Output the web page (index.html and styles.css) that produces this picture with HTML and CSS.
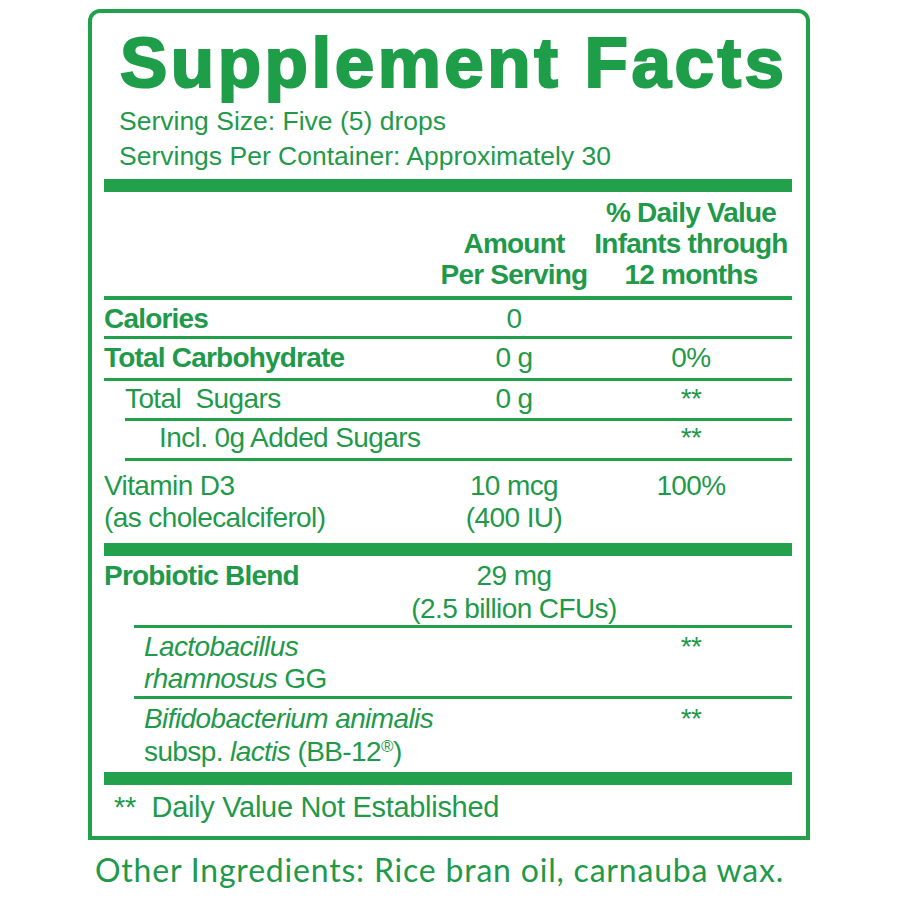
FILE: index.html
```html
<!DOCTYPE html>
<html lang="en">
<head>
<meta charset="utf-8">
<title>Supplement Facts</title>
<link rel="stylesheet" href="styles.css">
</head>
<body>
<div class="panel">
  <h1 class="title">Supplement Facts</h1>
  <div class="serving">
    <div>Serving Size: Five (5) drops</div>
    <div>Servings Per Container: Approximately 30</div>
  </div>
  <div class="bar"></div>
  <div class="grid head">
    <div></div>
    <div class="amt">Amount<br>Per Serving</div>
    <div class="dv">% Daily Value<br>Infants through<br>12 months</div>
  </div>
  <div class="rule medium"></div>

  <div class="grid row r-cal">
    <div class="label strong">Calories</div>
    <div class="amt">0</div>
    <div class="dv"></div>
  </div>
  <div class="rule"></div>
  <div class="grid row r-carb">
    <div class="label strong">Total Carbohydrate</div>
    <div class="amt">0 g</div>
    <div class="dv">0%</div>
  </div>
  <div class="rule"></div>
  <div class="grid row r-sug">
    <div class="label in1">Total&nbsp; Sugars</div>
    <div class="amt">0 g</div>
    <div class="dv">**</div>
  </div>
  <div class="rule ind1"></div>
  <div class="grid row r-add">
    <div class="label in2">Incl. 0g Added Sugars</div>
    <div class="amt"></div>
    <div class="dv">**</div>
  </div>
  <div class="rule ind1"></div>
  <div class="grid row r-vit">
    <div class="label">Vitamin D3<br>(as cholecalciferol)</div>
    <div class="amt">10 mcg<br>(400 IU)</div>
    <div class="dv">100%</div>
  </div>
  <div class="bar"></div>
  <div class="grid row r-pro">
    <div class="label strong">Probiotic Blend</div>
    <div class="amt">29 mg<br>(2.5 billion CFUs)</div>
    <div class="dv"></div>
  </div>
  <div class="rule ind2"></div>
  <div class="grid row r-lac">
    <div class="label in3"><i>Lactobacillus</i><br><i>rhamnosus</i> GG</div>
    <div class="amt"></div>
    <div class="dv">**</div>
  </div>
  <div class="rule ind2"></div>
  <div class="grid row r-bif">
    <div class="label in3"><i>Bifidobacterium animalis</i><br>subsp. <i>lactis</i> (BB-12<sup>®</sup>)</div>
    <div class="amt"></div>
    <div class="dv">**</div>
  </div>
  <div class="bar"></div>
  <div class="foot">**&nbsp; Daily Value Not Established</div>
</div>
<p class="other">Other Ingredients: Rice bran oil, carnauba wax.</p>
</body>
</html>
```

FILE: styles.css
```css
* { box-sizing: border-box; }

body {
  margin: 0;
  background: #ffffff;
  color: #1f9a4a;
  font-family: "Liberation Sans", Arial, sans-serif;
}

.panel {
  margin: 9px 0 0 88px;
  width: 722px;
  border: 4px solid #22a04c;
  border-radius: 12px 12px 0 0;
  padding: 14px 14px 0 12px;
}

.title {
  margin: 0 0 0 16px;
  font-size: 71px;
  line-height: 71px;
  font-weight: 700;
  letter-spacing: 3.5px;
  -webkit-text-stroke: 2.2px #1f9e4a;
  color: #1f9e4a;
  white-space: nowrap;
}

.serving {
  margin: 6px 0 0 15px;
  font-size: 26.5px;
  line-height: 35px;
}

.bar {
  height: 13px;
  background: #22a04c;
}

.serving + .bar { margin-top: 5px; }

.rule {
  height: 3px;
  background: #22a04c;
}
.rule.medium { height: 4px; }
.rule.ind1 { margin-left: 21px; }
.rule.ind2 { margin-left: 30px; }

.grid {
  display: grid;
  grid-template-columns: 330px 160px 194px;
  font-size: 28px;
  letter-spacing: -0.6px;
  white-space: nowrap;
}

.amt {
  text-align: center;
  margin: 0 -40px;
}
.dv {
  text-align: center;
  margin: 0 -20px;
}

.head {
  margin: 5px 0 6px;
  align-items: end;
  font-weight: 700;
  line-height: 31px;
  letter-spacing: -0.8px;
}

.row {
  line-height: 32px;
  align-items: start;
}

.strong {
  font-weight: 700;
  letter-spacing: -0.8px;
}

.in1 { padding-left: 21px; }
.in2 { padding-left: 55px; }
.in3 { padding-left: 40px; }

.r-cal  { height: 36px; padding-top: 3px; }
.r-carb { height: 39px; padding-top: 3px; }
.r-sug  { height: 37px; padding-top: 2px; }
.r-add  { height: 37px; padding-top: 1px; }
.r-vit  { height: 82px; padding-top: 9px; }
.r-pro  { height: 69px; padding-top: 3px; line-height: 33px; }
.r-lac  { height: 68px; padding-top: 3px; }
.r-bif  { height: 73px; padding-top: 3px; line-height: 33px; }

sup {
  font-size: 17px;
  line-height: 0;
  vertical-align: 9px;
}

.foot {
  height: 51px;
  padding: 6px 0 0 10px;
  font-size: 29px;
  line-height: 32px;
  letter-spacing: -0.3px;
}

.other {
  margin: 11px 0 0 95px;
  font-family: Lato, "Liberation Sans", sans-serif;
  font-size: 32px;
  line-height: 37px;
  letter-spacing: 0.8px;
  color: #1f9a4a;
  white-space: nowrap;
}
```
